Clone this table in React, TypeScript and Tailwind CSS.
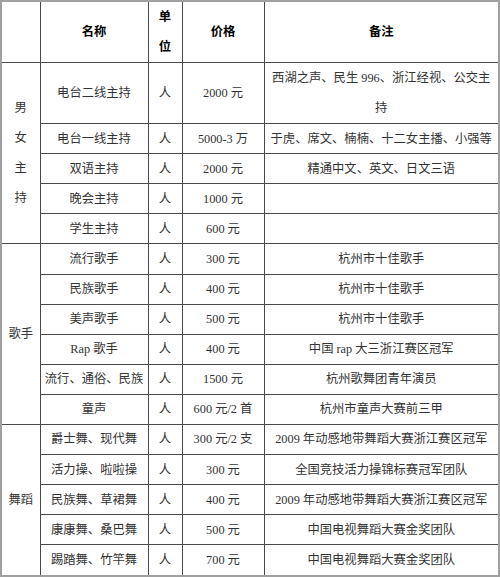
import React from 'react';

type Row = { name: string; unit: string; price: string; note: React.ReactNode };
type Group = { label: React.ReactNode; rows: Row[] };

const groups: Group[] = [
  {
    label: (
      <span className="flex flex-col items-center leading-[30px]">
        <span>男</span>
        <span>女</span>
        <span>主</span>
        <span>持</span>
      </span>
    ),
    rows: [
      {
        name: '电台二线主持',
        unit: '人',
        price: '2000 元',
        note: (
          <>
            西湖之声、民生 996、浙江经视、公交主
            <br />持
          </>
        ),
      },
      { name: '电台一线主持', unit: '人', price: '5000-3 万', note: '于虎、席文、楠楠、十二女主播、小强等' },
      { name: '双语主持', unit: '人', price: '2000 元', note: '精通中文、英文、日文三语' },
      { name: '晚会主持', unit: '人', price: '1000 元', note: '' },
      { name: '学生主持', unit: '人', price: '600 元', note: '' },
    ],
  },
  {
    label: '歌手',
    rows: [
      { name: '流行歌手', unit: '人', price: '300 元', note: '杭州市十佳歌手' },
      { name: '民族歌手', unit: '人', price: '400 元', note: '杭州市十佳歌手' },
      { name: '美声歌手', unit: '人', price: '500 元', note: '杭州市十佳歌手' },
      { name: 'Rap 歌手', unit: '人', price: '400 元', note: '中国 rap 大三浙江赛区冠军' },
      { name: '流行、通俗、民族', unit: '人', price: '1500 元', note: '杭州歌舞团青年演员' },
      { name: '童声', unit: '人', price: '600 元/2 首', note: '杭州市童声大赛前三甲' },
    ],
  },
  {
    label: '舞蹈',
    rows: [
      { name: '爵士舞、现代舞', unit: '人', price: '300 元/2 支', note: '2009 年动感地带舞蹈大赛浙江赛区冠军' },
      { name: '活力操、啦啦操', unit: '人', price: '300 元', note: '全国竞技活力操锦标赛冠军团队' },
      { name: '民族舞、草裙舞', unit: '人', price: '400 元', note: '2009 年动感地带舞蹈大赛浙江赛区冠军' },
      { name: '康康舞、桑巴舞', unit: '人', price: '500 元', note: '中国电视舞蹈大赛金奖团队' },
      { name: '踢踏舞、竹竿舞', unit: '人', price: '700 元', note: '中国电视舞蹈大赛金奖团队' },
    ],
  },
];

const cell = 'border border-[#4a4a4a] text-center align-middle p-0 whitespace-nowrap';

export default function App() {
  return (
    <div
      className="w-[500px] h-[577px] overflow-hidden bg-white border-2 border-[#a0a0a0] text-[12.3px] leading-[26px] text-[#333]"
      style={{ fontFamily: '"Liberation Serif", "Noto Sans CJK SC", serif' }}
    >
      <table className="w-full h-full table-fixed border-collapse border-hidden">
        <colgroup>
          <col className="w-[38px]" />
          <col className="w-[108px]" />
          <col className="w-[34px]" />
          <col className="w-[82px]" />
          <col />
        </colgroup>
        <thead>
          <tr className="h-[59px] font-bold text-black">
            <th className={cell}></th>
            <th className={cell}>名称</th>
            <th className={`${cell} leading-[30px]`}>
              单<br />位
            </th>
            <th className={cell}>价格</th>
            <th className={cell}>备注</th>
          </tr>
        </thead>
        <tbody>
          {groups.map((g, gi) =>
            g.rows.map((r, ri) => (
              <tr key={`${gi}-${ri}`} className={gi === 0 && ri === 0 ? 'h-[61px]' : 'h-[30px]'}>
                {ri === 0 && (
                  <td className={cell} rowSpan={g.rows.length}>
                    {g.label}
                  </td>
                )}
                <td className={cell}>{r.name}</td>
                <td className={cell}>{r.unit}</td>
                <td className={cell}>{r.price}</td>
                <td className={`${cell} ${gi === 0 && ri === 0 ? 'leading-[30px]' : ''}`}>{r.note}</td>
              </tr>
            ))
          )}
        </tbody>
      </table>
    </div>
  );
}
